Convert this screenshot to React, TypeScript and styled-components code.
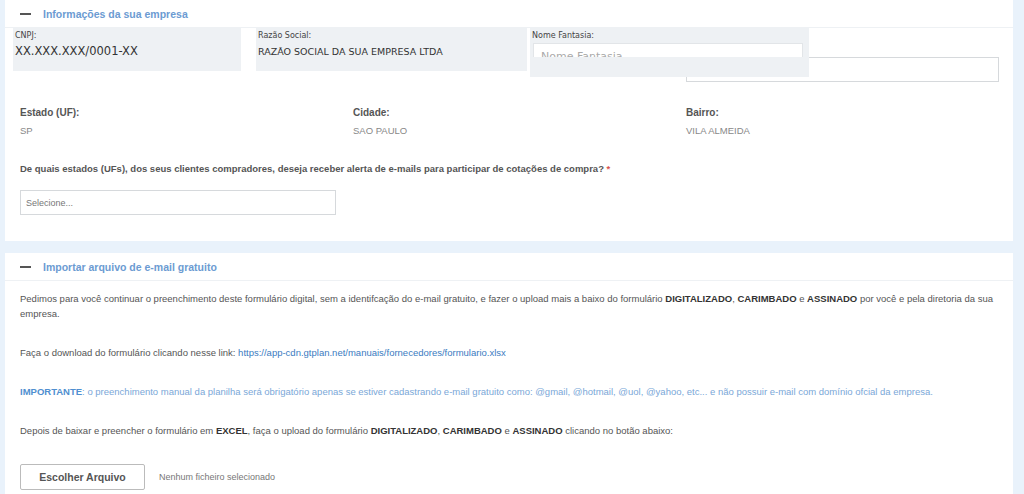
import React from "react";
import styled, { createGlobalStyle } from "styled-components";

const Global = createGlobalStyle`
  body { margin: 0; background: #e9f2fb; font-family: "Liberation Sans", Arial, sans-serif; }
`;

function Section({ title, children }: { title: string; children: React.ReactNode }) {
  return (
    <Card>
      <CardHeader>
        <Dash />
        <HeaderTitle>{title}</HeaderTitle>
      </CardHeader>
      {children}
    </Card>
  );
}

export default function App() {
  return (
    <Page>
      <Global />
      <Section title="Informações da sua empresa">
        <FieldsTop>
          <GrayBox $w={228}>
            <SmallLabel>CNPJ:</SmallLabel>
            <BigValue>XX.XXX.XXX/0001-XX</BigValue>
          </GrayBox>
          <GrayBox $w={271}>
            <SmallLabel>Razão Social:</SmallLabel>
            <MidValue>RAZÃO SOCIAL DA SUA EMPRESA LTDA</MidValue>
          </GrayBox>
          <RightField>
            <TextInput />
            <Overlay>
              <SmallLabel>Nome Fantasia:</SmallLabel>
              <OverlayInput>Nome Fantasia</OverlayInput>
            </Overlay>
          </RightField>
        </FieldsTop>
        <InfoRow>
          <InfoCol>
            <InfoLabel>Estado (UF):</InfoLabel>
            <InfoValue>SP</InfoValue>
          </InfoCol>
          <InfoCol>
            <InfoLabel>Cidade:</InfoLabel>
            <InfoValue>SAO PAULO</InfoValue>
          </InfoCol>
          <InfoCol>
            <InfoLabel>Bairro:</InfoLabel>
            <InfoValue>VILA ALMEIDA</InfoValue>
          </InfoCol>
        </InfoRow>
        <Question>
          De quais estados (UFs), dos seus clientes compradores, deseja receber alerta de e-mails para participar de cotações de compra? <Req>*</Req>
        </Question>
        <Select>Selecione...</Select>
      </Section>

      <Section title="Importar arquivo de e-mail gratuito">
        <Body>
          <Para>
            Pedimos para você continuar o preenchimento deste formulário digital, sem a identifcação do e-mail gratuito, e fazer o upload mais a baixo do formulário <b>DIGITALIZADO</b>, <b>CARIMBADO</b> e <b>ASSINADO</b> por você e pela diretoria da sua empresa.
          </Para>
          <Para>
            Faça o download do formulário clicando nesse link: <Link>https://app-cdn.gtplan.net/manuais/fornecedores/formulario.xlsx</Link>
          </Para>
          <Para $blue>
            <b>IMPORTANTE</b>: o preenchimento manual da planilha será obrigatório apenas se estiver cadastrando e-mail gratuito como: @gmail, @hotmail, @uol, @yahoo, etc... e não possuir e-mail com domínio ofcial da empresa.
          </Para>
          <Para>
            Depois de baixar e preencher o formulário em <b>EXCEL</b>, faça o upload do formulário <b>DIGITALIZADO</b>, <b>CARIMBADO</b> e <b>ASSINADO</b> clicando no botão abaixo:
          </Para>
          <FileRow>
            <FileButton>Escolher Arquivo</FileButton>
            <FileNote>Nenhum ficheiro selecionado</FileNote>
          </FileRow>
        </Body>
      </Section>
    </Page>
  );
}

const Page = styled.div`
  display: flex;
  flex-direction: column;
  gap: 12px;
  padding: 0 11px 0 5px;
  height: 494px;
  overflow: hidden;
`;

const Card = styled.div`
  background: #fff;
  flex-shrink: 0;
`;

const CardHeader = styled.div`
  display: flex;
  align-items: center;
  gap: 12px;
  height: 27px;
  padding: 0 11px 0 15px;
  border-bottom: 1px solid #eef1f4;
`;

const Dash = styled.span`
  width: 11px;
  height: 2px;
  background: #555;
`;

const HeaderTitle = styled.span`
  color: #6c9bd2;
  font-size: 10.5px;
  font-weight: bold;
`;

const FieldsTop = styled.div`
  display: flex;
  gap: 15px;
  padding: 0 8px;
`;

const GrayBox = styled.div<{ $w: number }>`
  width: ${(p) => p.$w}px;
  height: 43px;
  background: #eef1f4;
  padding: 3px 2px;
  box-sizing: border-box;
  font-family: "DejaVu Sans", sans-serif;
`;

const SmallLabel = styled.div`
  font-family: "DejaVu Sans", sans-serif;
  font-size: 8px;
  color: #444;
`;

const BigValue = styled.div`
  font-size: 11.5px;
  color: #333;
  margin-top: 4px;
`;

const MidValue = styled.div`
  font-size: 9.5px;
  color: #333;
  margin-top: 6px;
`;

const RightField = styled.div`
  flex: 1;
  position: relative;
  height: 54px;
  display: flex;
  justify-content: flex-end;
  align-items: flex-end;
  padding-right: 6px;
`;

const TextInput = styled.div`
  width: 311px;
  height: 23px;
  border: 1px solid #d6d9dc;
`;

const Overlay = styled.div`
  position: absolute;
  left: -12px;
  top: 0;
  width: 279px;
  height: 49px;
  background: #eef1f4;
  padding: 3px 2px;
  box-sizing: border-box;
  overflow: hidden;
`;

const OverlayInput = styled.div`
  margin-top: 3px;
  margin-left: 1px;
  width: 270px;
  height: 14px;
  background: #fff;
  border: 1px solid #e2e5e8;
  border-bottom: none;
  font-family: "DejaVu Sans", sans-serif;
  font-size: 11px;
  color: #aaa;
  padding: 4px 7px 0;
  box-sizing: border-box;
  overflow: hidden;
  line-height: 18px;
`;

const InfoRow = styled.div`
  display: grid;
  grid-template-columns: 333px 333px 1fr;
  padding: 25px 15px 0;
`;

const InfoCol = styled.div`
  display: flex;
  flex-direction: column;
  gap: 7px;
`;

const InfoLabel = styled.div`
  font-size: 10px;
  font-weight: bold;
  color: #555;
`;

const InfoValue = styled.div`
  font-size: 9.5px;
  color: #888;
`;

const Question = styled.div`
  padding: 27px 15px 0;
  font-size: 9.5px;
  font-weight: bold;
  color: #555;
`;

const Req = styled.span`
  color: #d9534f;
`;

const Select = styled.div`
  margin: 16px 15px 26px;
  width: 309px;
  height: 23px;
  border: 1px solid #d6d9dc;
  font-size: 9px;
  color: #777;
  display: flex;
  align-items: center;
  padding-left: 5px;
`;

const Body = styled.div`
  padding: 10px 20px 20px 15px;
  display: flex;
  flex-direction: column;
  gap: 24px;
`;

const Para = styled.div<{ $blue?: boolean }>`
  font-size: 9.5px;
  line-height: 15px;
  color: ${(p) => (p.$blue ? "#7aa7d8" : "#555")};
  & b { color: ${(p) => (p.$blue ? "#4f8fd0" : "#333")}; }
`;

const Link = styled.span`
  color: #3b7bbf;
`;

const FileRow = styled.div`
  display: flex;
  align-items: center;
  gap: 14px;
  margin-top: 2px;
`;

const FileButton = styled.div`
  width: 123px;
  height: 24px;
  border: 1px solid #bbb;
  border-radius: 2px;
  display: flex;
  align-items: center;
  justify-content: center;
  font-size: 10.5px;
  font-weight: bold;
  color: #555;
`;

const FileNote = styled.span`
  font-size: 9px;
  color: #777;
`;
